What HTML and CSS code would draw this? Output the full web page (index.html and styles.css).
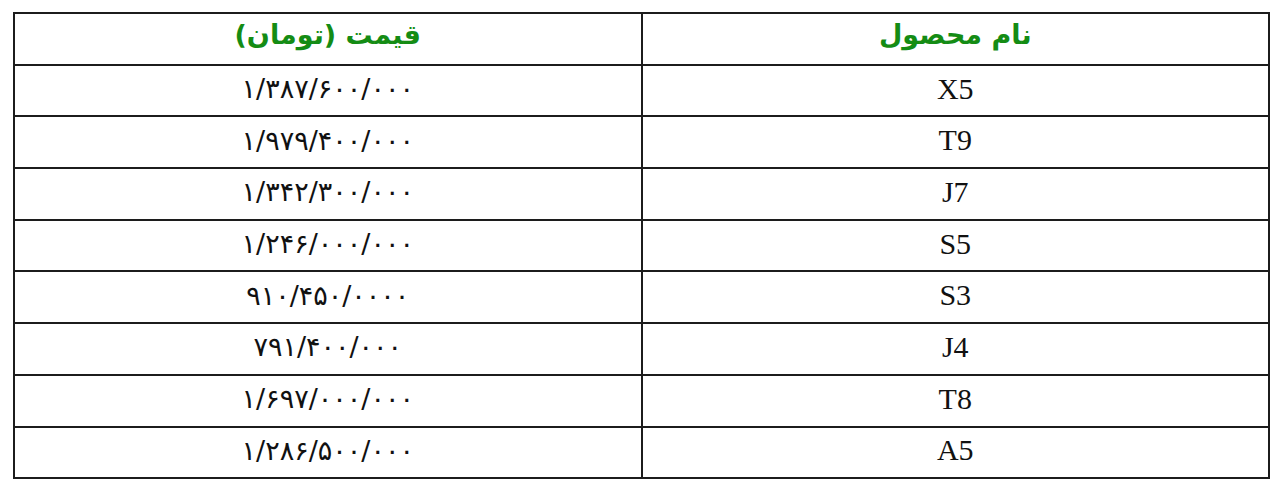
FILE: index.html
```html
<!DOCTYPE html>
<html lang="fa">
<head>
<meta charset="utf-8">
<title>قیمت محصولات</title>
<link rel="stylesheet" href="styles.css">
</head>
<body>
<table class="price-table" dir="rtl">
  <thead>
    <tr><th class="col-name">نام محصول</th><th class="col-price">قیمت (تومان)</th></tr>
  </thead>
  <tbody>
    <tr><td class="name">X5</td><td class="price">۱/۳۸۷/۶۰۰/۰۰۰</td></tr>
    <tr><td class="name">T9</td><td class="price">۱/۹۷۹/۴۰۰/۰۰۰</td></tr>
    <tr><td class="name">J7</td><td class="price">۱/۳۴۲/۳۰۰/۰۰۰</td></tr>
    <tr><td class="name">S5</td><td class="price">۱/۲۴۶/۰۰۰/۰۰۰</td></tr>
    <tr><td class="name">S3</td><td class="price">۹۱۰/۴۵۰/۰۰۰۰</td></tr>
    <tr><td class="name">J4</td><td class="price">۷۹۱/۴۰۰/۰۰۰</td></tr>
    <tr><td class="name">T8</td><td class="price">۱/۶۹۷/۰۰۰/۰۰۰</td></tr>
    <tr><td class="name">A5</td><td class="price">۱/۲۸۶/۵۰۰/۰۰۰</td></tr>
  </tbody>
</table>
</body>
</html>
```
FILE: styles.css
```css
html, body {
  margin: 0;
  padding: 0;
  background: #fff;
}
body {
  padding: 12px 10px 0 13px;
}
.price-table {
  width: 1257px;
  border-collapse: collapse;
  border: 2px solid #1c1c1c;
}
.price-table th,
.price-table td {
  border: 2px solid #1c1c1c;
  height: 51.7px;
  padding: 0 0 4px 0;
  box-sizing: border-box;
  text-align: center;
  vertical-align: middle;
  width: 50%;
  line-height: 1;
}
.price-table th {
  font-family: "DejaVu Sans", sans-serif;
  font-weight: bold;
  font-size: 27px;
  color: #148c14;
  padding-bottom: 8px;
}
.name {
  font-family: "Liberation Serif", "Times New Roman", serif;
  font-size: 30px;
  color: #111;
  padding-right: 8px;
}
.price {
  font-family: "DejaVu Sans", sans-serif;
  font-size: 27px;
  color: #111;
  direction: ltr;
}
```
